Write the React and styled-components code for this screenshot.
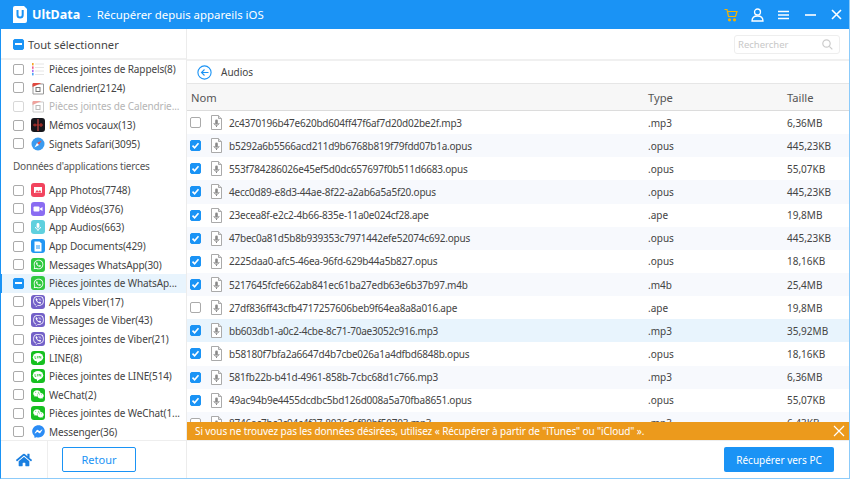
import React from "react";
import styled, { createGlobalStyle } from "styled-components";
import { FaWhatsapp, FaViber, FaWeixin, FaFacebookMessenger, FaHome } from "react-icons/fa";

const GlobalStyle = createGlobalStyle`
  html, body {
    margin: 0;
    padding: 0;
    height: 100%;
    overflow: hidden;
    background: #fff;
  }
  * {
    box-sizing: border-box;
  }
  #root {
    height: 100%;
  }
`;

const Window = styled.div`
  width: 850px;
  height: 479px;
  display: flex;
  flex-direction: column;
  font-family: "Noto Sans", "Open Sans", sans-serif;
  font-size: 10px;
  color: #444;
  border-left: 1px solid #1a93f5;
  border-right: 1px solid #8ccbfa;
  border-bottom: 1px solid #8ccbfa;
  overflow: hidden;
`;

const TitleBar = styled.header`
  height: 29px;
  margin: 0 -1px;
  flex-shrink: 0;
  background: #1a93f5;
  color: #fff;
  display: flex;
  align-items: center;
  padding-left: 13px;
`;

const AppName = styled.span`
  font-weight: 700;
  font-size: 12.5px;
  margin-left: 5px;
`;

const AppTitle = styled.span`
  font-size: 11.4px;
  margin-left: 7px;
`;

const WindowButtons = styled.div`
  margin-left: auto;
  display: flex;
  align-items: center;
`;

const WindowButton = styled.span`
  width: 26.5px;
  height: 29px;
  display: flex;
  align-items: center;
  justify-content: center;
`;

const Body = styled.div`
  flex: 1;
  min-height: 0;
  display: flex;
`;

const Sidebar = styled.aside`
  width: 186px;
  flex-shrink: 0;
  display: flex;
  flex-direction: column;
  border-right: 1px solid #ececec;
  overflow: hidden;
`;

const SelectAll = styled.div`
  height: 31px;
  flex-shrink: 0;
  display: flex;
  align-items: center;
  gap: 4px;
  padding: 1px 0 0 12px;
  font-size: 11.2px;
  color: #444;
  border-bottom: 2px solid #f0f0f0;
`;

const SideList = styled.div`
  flex: 1;
  min-height: 0;
  overflow: hidden;
`;

const SideRow = styled.div`
  height: 18.6px;
  display: flex;
  align-items: center;
  margin-left: -1px;
  padding-left: 11px;
  border-left: 2px solid ${(p) => (p.$active ? "#1a93f5" : "transparent")};
  background: ${(p) => (p.$active ? "#e8f4fd" : "transparent")};
  color: ${(p) => (p.$muted ? "#b5b5b5" : "#444")};
  white-space: nowrap;
`;

const SideLabel = styled.span`
  margin-left: 4px;
  letter-spacing: -0.1px;
`;

const SectionTitle = styled.div`
  height: 28px;
  padding: 6px 0 0 12px;
  color: #555;
  letter-spacing: -0.2px;
`;

const Box = styled.span`
  width: 11px;
  height: 11px;
  flex-shrink: 0;
  border-radius: 2px;
  display: inline-flex;
  align-items: center;
  justify-content: center;
  background: ${(p) => (p.$state === "off" ? "#fff" : "#1a93f5")};
  border: 1px solid ${(p) => (p.$state === "off" ? "#aaa" : "#1a93f5")};
  opacity: ${(p) => (p.$muted ? 0.45 : 1)};
`;

const Dash = styled.i`
  width: 7px;
  height: 2px;
  background: #fff;
`;

const Tile = styled.span`
  width: 14px;
  height: 14px;
  margin-left: 7px;
  flex-shrink: 0;
  border-radius: 3px;
  display: inline-flex;
  align-items: center;
  justify-content: center;
  color: #fff;
  font-size: 11px;
  background: ${(p) => p.$bg || "transparent"};
  opacity: ${(p) => (p.$muted ? 0.5 : 1)};
`;

const Main = styled.main`
  flex: 1;
  min-width: 0;
  display: flex;
  flex-direction: column;
`;

const SearchBar = styled.div`
  height: 32px;
  flex-shrink: 0;
  display: flex;
  align-items: center;
  justify-content: flex-end;
  padding-right: 9px;
  border-bottom: 2px solid #f0f0f0;
`;

const SearchBox = styled.div`
  width: 106px;
  height: 19px;
  display: flex;
  align-items: center;
  justify-content: space-between;
  padding: 0 6px 0 3px;
  border: 1px solid #eee;
  border-radius: 3px;
  color: #c8c8c8;
  font-size: 9.5px;
`;

const Crumb = styled.div`
  height: 23px;
  flex-shrink: 0;
  display: flex;
  align-items: center;
  gap: 9px;
  padding-left: 10px;
  border-bottom: 1px solid #e6e6e6;
  color: #444;
`;

const Grid = styled.div`
  display: grid;
  align-items: center;
`;

const TableHead = styled(Grid)`
  height: 27px;
  flex-shrink: 0;
  padding-left: 4px;
  grid-template-columns: 457px 139px 1fr;
  background: #f7f7f7;
  border-bottom: 1px solid #dcdcdc;
  font-size: 11.2px;
  color: #555;
`;

const TableBody = styled.div`
  flex: 1;
  min-height: 0;
  overflow: hidden;
`;

const Row = styled(Grid)`
  height: 23.15px;
  padding-left: 3px;
  grid-template-columns: 458px 139px 1fr;
  background: ${(p) => (p.$selected ? "#e8f4fd" : p.$odd ? "#f7f9fd" : "#fff")};
  color: #444;
`;

const NameCell = styled.div`
  display: flex;
  align-items: center;
  white-space: nowrap;
`;

const FileName = styled.span`
  margin-left: 6px;
  letter-spacing: -0.22px;
`;

const Notice = styled.div`
  height: 18px;
  flex-shrink: 0;
  display: flex;
  align-items: center;
  justify-content: space-between;
  padding: 0 4px 0 8px;
  background: #ec9a1c;
  color: #fff;
  letter-spacing: -0.1px;
`;

const Footer = styled.footer`
  height: 38px;
  flex-shrink: 0;
  display: flex;
  align-items: center;
  border-top: 1px solid #eee;
`;

const HomeCell = styled.div`
  width: 47px;
  height: 100%;
  display: flex;
  align-items: center;
  justify-content: center;
  border-right: 1px solid #eee;
  color: #1a7fe0;
  font-size: 16px;
`;

const BackButton = styled.button`
  width: 74px;
  height: 25px;
  margin-left: 14px;
  background: #fff;
  border: 1px solid #1a93f5;
  border-radius: 2px;
  color: #1a93f5;
  font: inherit;
  font-size: 11px;
`;

const RecoverButton = styled.button`
  width: 110px;
  height: 25px;
  margin-left: auto;
  margin-right: 15px;
  background: #1a93f5;
  border: 0;
  border-radius: 2px;
  color: #fff;
  font: inherit;
`;

const Check = ({ state = "off", muted }) => (
  <Box $state={state} $muted={muted}>
    {state === "mixed" && <Dash />}
    {state === "on" && (
      <svg width="9" height="9" viewBox="0 0 9 9">
        <path d="M1.5 4.6 3.6 6.8 7.5 2.2" fill="none" stroke="#fff" strokeWidth="1.6" />
      </svg>
    )}
  </Box>
);

const FileIcon = () => (
  <svg width="13" height="15" viewBox="0 0 13 15" style={{ marginLeft: 9, flexShrink: 0 }}>
    <path d="M1.5.5h7l3 3v11h-10z" fill="#fff" stroke="#aaa" />
    <path d="M8.5.5v3h3" fill="#ddd" stroke="#aaa" />
    <rect x="5.2" y="4.5" width="2.6" height="5" rx="1.3" fill="#888" />
    <path d="M4 8c0 3 5 3 5 0M6.5 10.5V12" fill="none" stroke="#888" />
  </svg>
);

const Logo = () => (
  <svg width="14" height="17" viewBox="0 0 14 17">
    <path d="M2 0h9l3 3v12a2 2 0 0 1-2 2H0V2a2 2 0 0 1 2-2z" fill="#fff" />
    <path d="M4.5 4v5a2.6 2.6 0 0 0 5.2 0V4" fill="none" stroke="#1a93f5" strokeWidth="2" />
  </svg>
);

const ReminderIcon = () => (
  <svg width="14" height="14" viewBox="0 0 14 14">
    <rect x="1" y="1" width="1.6" height="2.4" fill="#f5a623" />
    <rect x="1" y="4.4" width="1.6" height="2.4" fill="#f25c8a" />
    <rect x="1" y="7.8" width="1.6" height="2.4" fill="#a86bf0" />
    <rect x="1" y="11" width="1.6" height="2.4" fill="#4aa3f5" />
    <path d="M4 2h9M4 5.5h9M4 9h9M4 12.5h9" stroke="#e6e6e6" />
  </svg>
);

const CalendarIcon = () => (
  <svg width="14" height="14" viewBox="0 0 14 14">
    <path d="M2 3h10.5v10H2z" fill="#fff" stroke="#999" />
    <path d="M1.5 6V3a1 1 0 0 1 1-1h8z" fill="#e0483e" />
    <rect x="5" y="6.5" width="4" height="4" fill="none" stroke="#777" />
  </svg>
);

const SafariIcon = () => (
  <svg width="14" height="14" viewBox="0 0 14 14">
    <circle cx="7" cy="7" r="6.5" fill="#3a9bf0" />
    <path d="M10.5 3.5 6 6l2 2z" fill="#e8504a" />
    <path d="M3.5 10.5 6 6l2 2z" fill="#fff" />
  </svg>
);

const VoiceIcon = () => (
  <svg width="12" height="12" viewBox="0 0 12 12">
    <path d="M6 0v12" stroke="#e8504a" />
    <path d="M1 6h10M3 4.5v3M9 4v4" stroke="#c0302a" />
  </svg>
);

const GlyphPhoto = () => (
  <svg width="10" height="10" viewBox="0 0 10 10">
    <rect x="1" y="2" width="8" height="6" fill="#fff" />
    <path d="M2 7.5 4 5l1.5 1.5L7 5l1.5 2.5z" fill="#f2445e" />
  </svg>
);

const GlyphVideo = () => (
  <svg width="10" height="10" viewBox="0 0 10 10">
    <rect x=".5" y="2.5" width="6" height="5" rx="1" fill="#fff" />
    <path d="M7 4.5 9.5 3v4L7 5.5z" fill="#fff" />
  </svg>
);

const GlyphAudio = () => (
  <svg width="10" height="10" viewBox="0 0 10 10">
    <rect x="3.6" y="1" width="2.8" height="5" rx="1.4" fill="#fff" />
    <path d="M2.5 5c0 3 5 3 5 0M5 7.5V9" fill="none" stroke="#fff" />
  </svg>
);

const GlyphDoc = () => (
  <svg width="10" height="11" viewBox="0 0 10 11">
    <path d="M1.5.5h5l2 2v8h-7z" fill="#fff" />
    <path d="M3 5h4M3 7h4" stroke="#2196f3" />
  </svg>
);

const GlyphLine = () => (
  <svg width="12" height="12" viewBox="0 0 12 12">
    <ellipse cx="6" cy="5.2" rx="5.2" ry="4.3" fill="#fff" />
    <path d="M5 9v2.2L8 9z" fill="#fff" />
    <path d="M3 4v2.4h1.2M5.4 4v2.4M7 6.4V4l1.8 2.4V4" fill="none" stroke="#16c020" strokeWidth=".7" />
  </svg>
);

const sideTop = [
  { label: "Pièces jointes de Rappels(8)", icon: <ReminderIcon /> },
  { label: "Calendrier(2124)", icon: <CalendarIcon /> },
  { label: "Pièces jointes de Calendrie...", icon: <CalendarIcon />, muted: true },
  { label: "Mémos vocaux(13)", icon: <VoiceIcon />, bg: "#16161c" },
  { label: "Signets Safari(3095)", icon: <SafariIcon /> },
];

const whats = { icon: <FaWhatsapp />, bg: "#2fc93f" };
const viber = { icon: <FaViber />, bg: "#7360c8" };
const line = { icon: <GlyphLine />, bg: "#16c020" };
const wechat = { icon: <FaWeixin />, bg: "#16c020" };

const sideApps = [
  { label: "App Photos(7748)", icon: <GlyphPhoto />, bg: "#f2445e" },
  { label: "App Vidéos(376)", icon: <GlyphVideo />, bg: "#8a6cf2" },
  { label: "App Audios(663)", icon: <GlyphAudio />, bg: "#5fd0de" },
  { label: "App Documents(429)", icon: <GlyphDoc />, bg: "#2196f3" },
  { label: "Messages WhatsApp(30)", ...whats },
  { label: "Pièces jointes de WhatsAp...", ...whats, active: true },
  { label: "Appels Viber(17)", ...viber },
  { label: "Messages de Viber(43)", ...viber },
  { label: "Pièces jointes de Viber(21)", ...viber },
  { label: "LINE(8)", ...line },
  { label: "Pièces jointes de LINE(514)", ...line },
  { label: "WeChat(2)", ...wechat },
  { label: "Pièces jointes de WeChat(1...", ...wechat },
  { label: "Messenger(36)", icon: <FaFacebookMessenger color="#2b8cf5" size={13} /> },
];

const files = [
  ["2c4370196b47e620bd604ff47f6af7d20d02be2f.mp3", ".mp3", "6,36MB", false],
  ["b5292a6b5566acd211d9b6768b819f79fdd07b1a.opus", ".opus", "445,23KB", true],
  ["553f784286026e45ef5d0dc657697f0b511d6683.opus", ".opus", "55,07KB", true],
  ["4ecc0d89-e8d3-44ae-8f22-a2ab6a5a5f20.opus", ".opus", "445,23KB", true],
  ["23ecea8f-e2c2-4b66-835e-11a0e024cf28.ape", ".ape", "19,8MB", true],
  ["47bec0a81d5b8b939353c7971442efe52074c692.opus", ".opus", "445,23KB", true],
  ["2225daa0-afc5-46ea-96fd-629b44a5b827.opus", ".opus", "18,16KB", true],
  ["5217645fcfe662ab841ec61ba27edb63e6b37b97.m4b", ".m4b", "25,4MB", true],
  ["27df836ff43cfb4717257606beb9f64ea8a8a016.ape", ".ape", "19,8MB", false],
  ["bb603db1-a0c2-4cbe-8c71-70ae3052c916.mp3", ".mp3", "35,92MB", true],
  ["b58180f7bfa2a6647d4b7cbe026a1a4dfbd6848b.opus", ".opus", "18,16KB", true],
  ["581fb22b-b41d-4961-858b-7cbc68d1c766.mp3", ".mp3", "6,36MB", true],
  ["49ac94b9e4455dcdbc5bd126d008a5a70fba8651.opus", ".opus", "55,07KB", true],
  ["8746ac7bc2c94c4f27-8026c6f80bf50703.mp3", ".mp3", "6,43KB", false],
];

function SideItem({ item }) {
  return (
    <SideRow $active={item.active} $muted={item.muted}>
      <Check state={item.active ? "mixed" : "off"} muted={item.muted} />
      <Tile $bg={item.bg} $muted={item.muted}>
        {item.icon}
      </Tile>
      <SideLabel>{item.label}</SideLabel>
    </SideRow>
  );
}

export default function App() {
  return (
    <>
      <GlobalStyle />
      <Window>
        <TitleBar>
          <Logo />
          <AppName>UltData</AppName>
          <AppTitle>-&nbsp;&nbsp;Récupérer depuis appareils iOS</AppTitle>
          <WindowButtons>
            <WindowButton>
              <svg width="14" height="14" viewBox="0 0 14 14" fill="none" stroke="#f5b301" strokeWidth="1.2">
                <path d="M.5 1.5h2.5l1.5 7h7l1.5-5H3.5" />
                <circle cx="5.5" cy="11.8" r="1" fill="#f5b301" />
                <circle cx="10.5" cy="11.8" r="1" fill="#f5b301" />
              </svg>
            </WindowButton>
            <WindowButton>
              <svg width="13" height="14" viewBox="0 0 13 14" fill="none" stroke="#fff" strokeWidth="1.3">
                <circle cx="6.5" cy="4" r="3" />
                <path d="M1 13c0-3 2-5 5.5-5S12 10 12 13z" />
              </svg>
            </WindowButton>
            <WindowButton>
              <svg width="11" height="10" viewBox="0 0 11 10" stroke="#fff" strokeWidth="1.6">
                <path d="M0 1.5h11M0 5h11M0 8.5h11" />
              </svg>
            </WindowButton>
            <WindowButton>
              <svg width="11" height="4" viewBox="0 0 11 4" stroke="#fff" strokeWidth="1.6">
                <path d="M0 2h11" />
              </svg>
            </WindowButton>
            <WindowButton>
              <svg width="11" height="11" viewBox="0 0 11 11" stroke="#fff" strokeWidth="1.6">
                <path d="M1 1l9 9M10 1l-9 9" />
              </svg>
            </WindowButton>
          </WindowButtons>
        </TitleBar>
        <Body>
          <Sidebar>
            <SelectAll>
              <Check state="mixed" />
              <span>Tout sélectionner</span>
            </SelectAll>
            <SideList>
              {sideTop.map((item) => (
                <SideItem key={item.label} item={item} />
              ))}
              <SectionTitle>Données d'applications tierces</SectionTitle>
              {sideApps.map((item) => (
                <SideItem key={item.label} item={item} />
              ))}
            </SideList>
            <Footer>
              <HomeCell>
                <FaHome />
              </HomeCell>
              <BackButton>Retour</BackButton>
            </Footer>
          </Sidebar>
          <Main>
            <SearchBar>
              <SearchBox>
                <span>Rechercher</span>
                <svg width="11" height="11" viewBox="0 0 11 11" fill="none" stroke="#ccc" strokeWidth="1.2">
                  <circle cx="4.5" cy="4.5" r="3.7" />
                  <path d="M7.3 7.3l3 3" />
                </svg>
              </SearchBox>
            </SearchBar>
            <Crumb>
              <svg width="15" height="15" viewBox="0 0 15 15" fill="none" stroke="#1a93f5" strokeWidth="1.1">
                <circle cx="7.5" cy="7.5" r="6.6" />
                <path d="M11.5 7.5h-7M7.5 4.5l-3 3 3 3" />
              </svg>
              <span>Audios</span>
            </Crumb>
            <TableHead>
              <span>Nom</span>
              <span>Type</span>
              <span>Taille</span>
            </TableHead>
            <TableBody>
              {files.map(([name, type, size, on], i) => (
                <Row key={name} $odd={i % 2 === 1} $selected={i === 9}>
                  <NameCell>
                    <Check state={on ? "on" : "off"} />
                    <FileIcon />
                    <FileName>{name}</FileName>
                  </NameCell>
                  <span>{type}</span>
                  <span>{size}</span>
                </Row>
              ))}
            </TableBody>
            <Notice>
              <span>Si vous ne trouvez pas les données désirées, utilisez « Récupérer à partir de "iTunes" ou "iCloud" ».</span>
              <svg width="12" height="12" viewBox="0 0 12 12" stroke="#fff" strokeWidth="1.2">
                <path d="M1 1l10 10M11 1l-10 10" />
              </svg>
            </Notice>
            <Footer>
              <RecoverButton>Récupérer vers PC</RecoverButton>
            </Footer>
          </Main>
        </Body>
      </Window>
    </>
  );
}
